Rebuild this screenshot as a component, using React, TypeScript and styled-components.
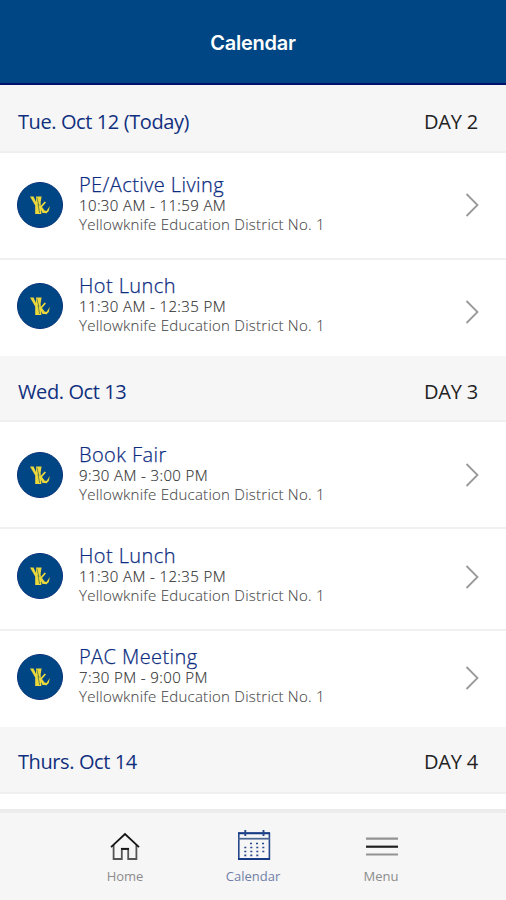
import React from 'react';
import styled, { createGlobalStyle } from 'styled-components';

const GlobalStyle = createGlobalStyle`
  * { box-sizing: border-box; }
  body { margin: 0; background: #fff; font-family: "Open Sans", "Noto Sans", sans-serif; }
`;

const Screen = styled.div`
  width: 506px;
  height: 900px;
  display: flex;
  flex-direction: column;
  overflow: hidden;
  background: #fff;
`;

const Header = styled.header`
  height: 85px;
  flex: none;
  display: flex;
  align-items: center;
  justify-content: center;
  padding-top: 3px;
  background: #004684;
  border-bottom: 2px solid #00116c;
`;

const Title = styled.h1`
  margin: 0;
  font: 600 20px/28px Inter, sans-serif;
  letter-spacing: -0.25px;
  color: #fff;
`;

const Agenda = styled.main`
  flex: 1;
  min-height: 0;
  overflow: hidden;
`;

const DayBar = styled.div<{ $height: number; $drop: number }>`
  height: ${p => p.$height}px;
  display: flex;
  align-items: center;
  justify-content: space-between;
  padding: ${p => p.$drop}px 28px 0 18px;
  background: #f6f6f6;
  border-bottom: 2px solid #efefef;
`;

const DateLabel = styled.span`
  font-size: 20px;
  line-height: 28px;
  letter-spacing: -0.4px;
  color: #10307e;
`;

const DayLabel = styled.span`
  font-size: 20px;
  line-height: 28px;
  letter-spacing: -0.2px;
  color: #222;
`;

const EventRow = styled.div<{ $height: number; $top: number; $last: boolean }>`
  height: ${p => p.$height}px;
  display: flex;
  align-items: flex-start;
  padding: ${p => p.$top}px 26px 0 17px;
  border-bottom: ${p => (p.$last ? '0' : '2px solid #f0f0f0')};
`;

const Badge = styled.div`
  width: 46px;
  height: 46px;
  flex: none;
  border-radius: 50%;
  background: #004684;
  border: 1px solid #003078;
  display: flex;
  align-items: center;
  justify-content: center;
`;

const Details = styled.div`
  flex: 1;
  margin: -10px 0 0 16px;
  white-space: nowrap;
`;

const EventName = styled.div`
  font-size: 20px;
  font-weight: 300;
  line-height: 25px;
  letter-spacing: 0.42px;
  color: #0c2c80;
  -webkit-text-stroke: 0.25px #0c2c80;
`;

const Time = styled.div`
  font-size: 15px;
  font-weight: 300;
  line-height: 17px;
  letter-spacing: 0.38px;
  color: #333;
  -webkit-text-stroke: 0.15px #333;
`;

const Place = styled.div`
  font-size: 15px;
  font-weight: 300;
  line-height: 20px;
  letter-spacing: 0.25px;
  color: #484848;
  -webkit-text-stroke: 0.1px #484848;
`;

const ChevronSlot = styled.div<{ $top: number }>`
  padding-top: ${p => p.$top}px;
  display: flex;
`;

const TabBar = styled.nav`
  height: 91px;
  flex: none;
  display: flex;
  justify-content: center;
  background: #f6f6f6;
  border-top: 4px solid #ececec;
`;

const Tab = styled.div`
  width: 128px;
  display: flex;
  flex-direction: column;
  align-items: center;
  padding-top: 15px;
`;

const TabIcon = styled.div`
  height: 38px;
  display: flex;
`;

const TabLabel = styled.span<{ $active?: boolean }>`
  font-size: 13px;
  line-height: 20px;
  color: ${p => (p.$active ? '#7180a8' : '#8c8c8c')};
`;

const DistrictMark = () => (
  <svg width="22" height="22" viewBox="0 0 22 22" fill="#ecd83a">
    <path d="M1 2.5h3.6L7 8V2.5h5.6l-1 6 .8 11.5H6.2V11.5z" />
    <path d="M7.8 3.5 10 12M9 10l1.6 9" fill="none" stroke="#4c7550" strokeWidth=".8" />
    <path d="m15.6 7.5 1.4 1-4 4.5 2.8 3.8H18V19h-4.4l-3-5.8z" />
    <path d="m20.8 12-1 5-3.2 3 1.6-4z" />
  </svg>
);

const Chevron = () => (
  <svg width="16" height="26" viewBox="0 0 16 26" fill="none" stroke="#999" strokeWidth="1.8">
    <path d="M2.5 2 13.5 13 2.5 24" />
  </svg>
);

const HomeIcon = () => (
  <svg width="32" height="38" viewBox="0 0 32 38" fill="none" strokeWidth="1.8">
    <path d="M4.6 17V31h8.2V21h6.4v10h8.2V17" stroke="#555" />
    <path d="M2 19.2 16 6 30 19.2" stroke="#151515" />
    <path d="M12 20.8h8" stroke="#151515" />
  </svg>
);

const CalendarIcon = () => (
  <svg width="36" height="38" viewBox="0 0 36 38" fill="none" stroke="#27488b">
    <path d="M3.8 5.2h30.6v25.7H3.8z" strokeWidth="1.6" />
    <path d="M3 5.2h32M3 31h32" stroke="#163b84" strokeWidth="1.9" />
    <path d="M3 10.7h32" stroke="#496591" strokeWidth="1.7" />
    <path d="M10.3 2v6M28.5 2v6" strokeWidth="1.9" />
    <path d="M15 15.5h15M9.3 19.5h21M9.3 23.5h21M9.3 27.3h15" strokeWidth="1.7" strokeDasharray="2 4" />
  </svg>
);

const MenuIcon = () => (
  <svg width="36" height="38" viewBox="0 0 36 38" fill="none" strokeWidth="2.2">
    <path d="M3 10.6h32M3 26.5h32" stroke="#929292" />
    <path d="M3 18.7h32" stroke="#222" />
  </svg>
);

type Entry = { name: string; time: string; height: number; top: number; chevron: number };
type Day = { date: string; day: string; height: number; drop: number; events: Entry[] };

const days: Day[] = [
  {
    date: 'Tue. Oct 12 (Today)', day: 'DAY 2', height: 68, drop: 7,
    events: [
      { name: 'PE/Active Living', time: '10:30 AM - 11:59 AM', height: 107, top: 29, chevron: 10 },
      { name: 'Hot Lunch', time: '11:30 AM - 12:35 PM', height: 96, top: 23, chevron: 16 },
    ],
  },
  {
    date: 'Wed. Oct 13', day: 'DAY 3', height: 66, drop: 7,
    events: [
      { name: 'Book Fair', time: '9:30 AM - 3:00 PM', height: 107, top: 30, chevron: 10 },
      { name: 'Hot Lunch', time: '11:30 AM - 12:35 PM', height: 102, top: 24, chevron: 11 },
      { name: 'PAC Meeting', time: '7:30 PM - 9:00 PM', height: 96, top: 23, chevron: 11 },
    ],
  },
  { date: 'Thurs. Oct 14', day: 'DAY 4', height: 67, drop: 5, events: [] },
];

export default function App() {
  return (
    <Screen>
      <GlobalStyle />
      <Header><Title>Calendar</Title></Header>
      <Agenda>
        {days.map(d => (
          <section key={d.day}>
            <DayBar $height={d.height} $drop={d.drop}>
              <DateLabel>{d.date}</DateLabel>
              <DayLabel>{d.day}</DayLabel>
            </DayBar>
            {d.events.map((e, i) => (
              <EventRow key={e.name} $height={e.height} $top={e.top} $last={i === d.events.length - 1}>
                <Badge><DistrictMark /></Badge>
                <Details>
                  <EventName>{e.name}</EventName>
                  <Time>{e.time}</Time>
                  <Place>Yellowknife Education District No. 1</Place>
                </Details>
                <ChevronSlot $top={e.chevron}><Chevron /></ChevronSlot>
              </EventRow>
            ))}
          </section>
        ))}
      </Agenda>
      <TabBar>
        <Tab><TabIcon><HomeIcon /></TabIcon><TabLabel>Home</TabLabel></Tab>
        <Tab><TabIcon><CalendarIcon /></TabIcon><TabLabel $active>Calendar</TabLabel></Tab>
        <Tab><TabIcon><MenuIcon /></TabIcon><TabLabel>Menu</TabLabel></Tab>
      </TabBar>
    </Screen>
  );
}
